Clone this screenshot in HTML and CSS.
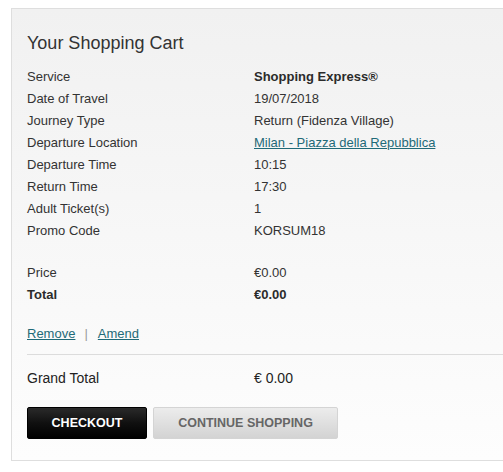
FILE: index.html
```html
<!DOCTYPE html>
<html lang="en">
<head>
<meta charset="utf-8">
<title>Your Shopping Cart</title>
<link rel="stylesheet" href="styles.css">
</head>
<body>
<div class="page">
  <section class="cart">
    <h1 class="cart-title">Your Shopping Cart</h1>
    <dl class="details">
      <div class="row"><dt>Service</dt><dd class="strong">Shopping Express®</dd></div>
      <div class="row"><dt>Date of Travel</dt><dd>19/07/2018</dd></div>
      <div class="row"><dt>Journey Type</dt><dd>Return (Fidenza Village)</dd></div>
      <div class="row"><dt>Departure Location</dt><dd><a class="link" href="#">Milan - Piazza della Repubblica</a></dd></div>
      <div class="row"><dt>Departure Time</dt><dd>10:15</dd></div>
      <div class="row"><dt>Return Time</dt><dd>17:30</dd></div>
      <div class="row"><dt>Adult Ticket(s)</dt><dd>1</dd></div>
      <div class="row"><dt>Promo Code</dt><dd>KORSUM18</dd></div>
    </dl>
    <dl class="details prices">
      <div class="row"><dt>Price</dt><dd>€0.00</dd></div>
      <div class="row total"><dt>Total</dt><dd>€0.00</dd></div>
    </dl>
    <div class="actions">
      <a class="link" href="#">Remove</a><span class="sep">|</span><a class="link" href="#">Amend</a>
    </div>
    <hr class="divider">
    <div class="row grand"><span class="label">Grand Total</span><span class="value">€ 0.00</span></div>
    <div class="buttons">
      <button class="btn btn-dark" type="button">CHECKOUT</button>
      <button class="btn btn-light" type="button">CONTINUE SHOPPING</button>
    </div>
  </section>
</div>
</body>
</html>
```

FILE: styles.css
```css
html, body {
  margin: 0;
  padding: 0;
  background: #ffffff;
}

body {
  font-family: "Liberation Sans", Arial, sans-serif;
  color: #333333;
  font-size: 13px;
}

.page {
  padding: 8px 0 0 11px;
}

.cart {
  border: 1px solid #dedede;
  border-right: none;
  background: linear-gradient(to bottom, #f1f1f1 0%, #f7f7f7 50%, #fdfdfd 100%);
  padding: 24px 0 21px 15px;
}

.cart-title {
  margin: 0 0 12px 0;
  font-size: 18px;
  font-weight: normal;
  line-height: 21px;
  color: #333333;
}

.details {
  margin: 0;
}

.row {
  display: grid;
  grid-template-columns: 227px 1fr;
  height: 22px;
  line-height: 22px;
}

.row dt,
.row dd {
  margin: 0;
}

.strong {
  font-weight: bold;
  color: #2b2b2b;
}

.prices {
  margin-top: 20px;
}

.total {
  font-weight: bold;
  color: #2b2b2b;
}

.actions {
  margin-top: 17px;
  height: 22px;
  line-height: 22px;
}

.link {
  color: #1f6a78;
  text-decoration: underline;
}

.sep {
  color: #9a9a9a;
  margin: 0 10px 0 9px;
}

.divider {
  border: 0;
  border-top: 1px solid #dcdcdc;
  margin: 9px 0 0 0;
  height: 0;
}

.grand {
  margin-top: 12px;
  font-size: 14px;
  color: #222222;
}

.buttons {
  display: flex;
  gap: 6px;
  margin-top: 18px;
}

.btn {
  height: 32px;
  border-radius: 2px;
  font-family: "Liberation Sans", Arial, sans-serif;
  font-size: 12.5px;
  font-weight: bold;
  padding: 0;
  cursor: pointer;
}

.btn-dark {
  width: 120px;
  color: #ffffff;
  border: 1px solid #000000;
  background: linear-gradient(to bottom, #2a2a2a 0%, #101010 50%, #000000 100%);
}

.btn-light {
  width: 185px;
  color: #666666;
  border: 1px solid #d4d4d4;
  background: linear-gradient(to bottom, #ececec 0%, #dddddd 60%, #d3d3d3 100%);
}
```
